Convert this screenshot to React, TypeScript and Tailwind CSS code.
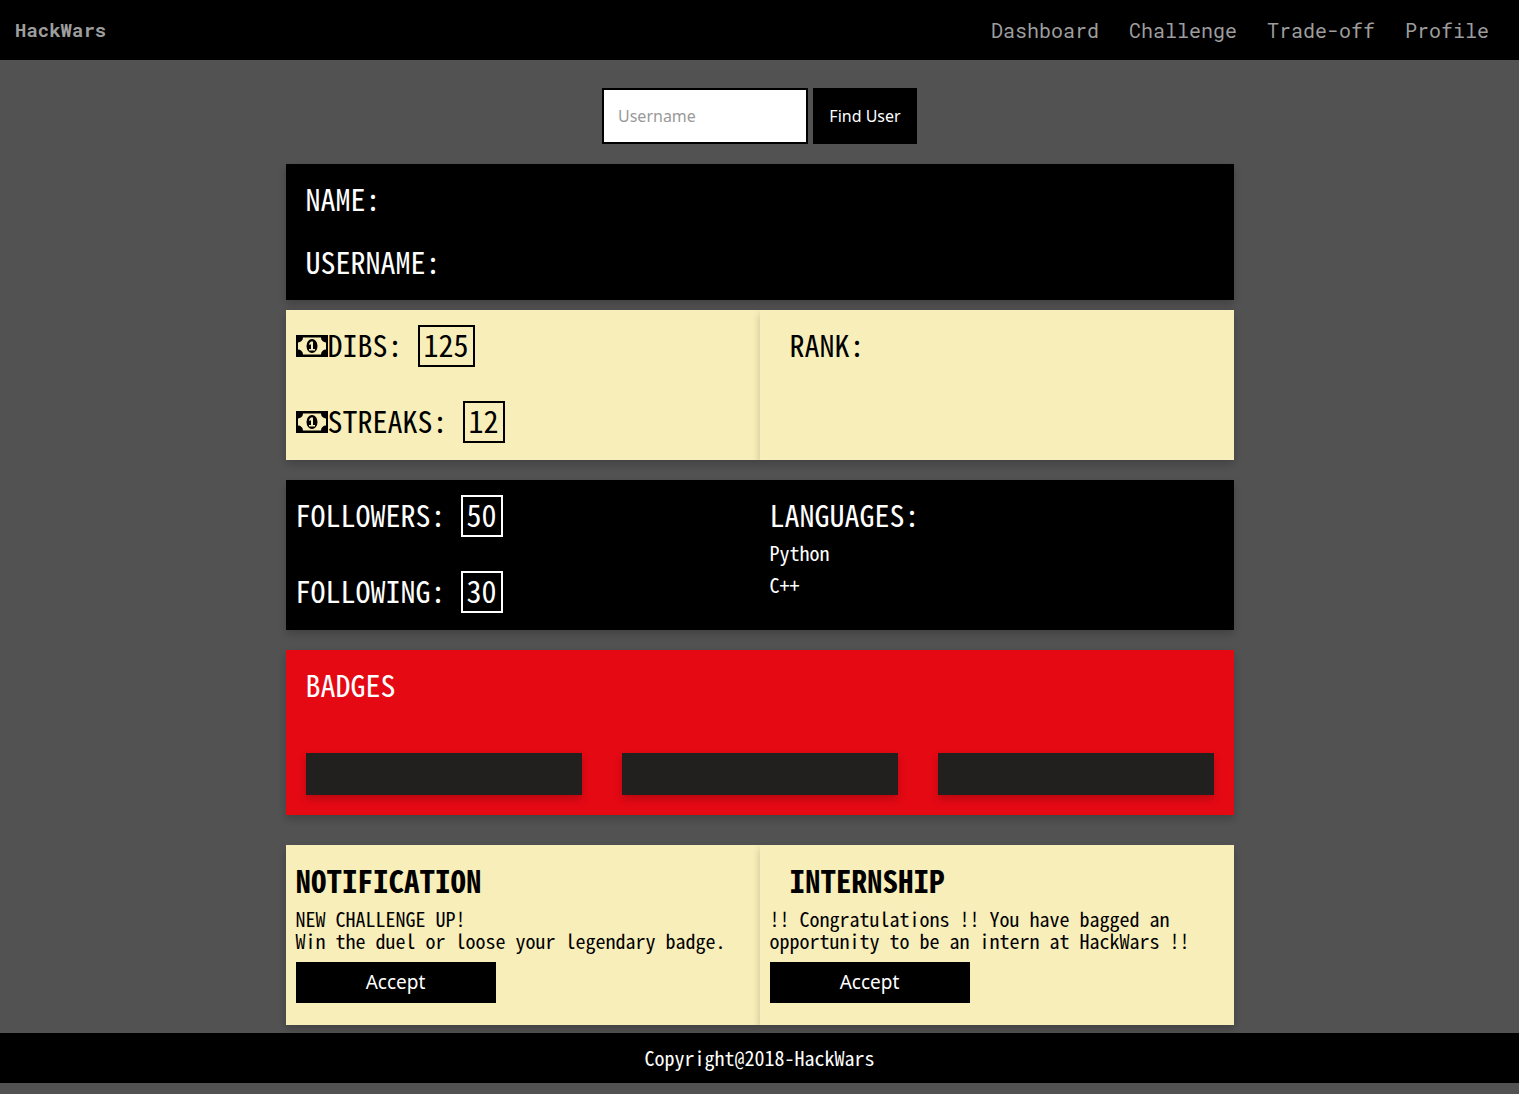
import React from "react";

const links = ["Dashboard", "Challenge", "Trade-off", "Profile"];

function MoneyIcon() {
  return (
    <svg viewBox="0 0 32 22" className="h-[22px] w-8 shrink-0" aria-hidden="true">
      <path fill="currentColor" fillRule="evenodd" d="M0 0h32v22H0zM7 2.500A5 5 0 0 1 2 7.500v7a5 5 0 0 1 5 5h18a5 5 0 0 1 5-5v-7a5 5 0 0 1-5-5z" />
      <ellipse cx="16" cy="11" rx="5.500" ry="7" fill="currentColor" />
      <path fill="#f8eeba" d="M15 6.500h2v7.500h2v1.500h-6v-1.500h2V9.200l-1.700.7V8.200z" />
    </svg>
  );
}

function Stat({ label, value, icon }: { label: string; value: number; icon?: boolean }) {
  return (
    <div className="flex h-[42px] items-center text-[30px] leading-[33px]">
      {icon && <MoneyIcon />}
      <h2 className="pb-1">{label}</h2>
      <span className="ml-[15px] border-2 px-1 pb-1 leading-[34px]">{value}</span>
    </div>
  );
}

const shadow = "shadow-[0_4px_8px_0_rgba(0,0,0,0.2)]";

export default function App() {
  return (
    <div className="min-h-screen bg-[#525252] font-['Noto_Sans_Mono_CJK_JP','Noto_Sans_CJK_JP',monospace] text-xl">
      <header className="flex h-[60px] items-center justify-between bg-black px-[15px] font-['Roboto_Mono','Liberation_Mono',monospace] text-[#9d9d9d]">
        <a href="#" className="text-[19px] font-bold">HackWars</a>
        <nav className="flex gap-[30px] pr-[15px]">
          {links.map((l) => (
            <a key={l} href="#">{l}</a>
          ))}
        </nav>
      </header>

      <main className="mx-auto max-w-[948px] pt-7 pb-2">
        <form className="flex justify-center gap-[5px] font-['Noto_Sans',sans-serif] text-base">
          <input
            type="text"
            aria-label="Username"
            placeholder="Username"
            className="h-14 w-[206px] border-2 border-black bg-white px-3.5 placeholder:text-[#999]"
          />
          <button type="button" className="h-14 w-[104px] bg-black text-white">Find User</button>
        </form>

        <section className={`mt-5 flex flex-col gap-[30px] bg-black px-5 pt-[18px] pb-[22px] text-[30px] leading-[33px] text-white ${shadow}`}>
          <h2>NAME:</h2>
          <h2>USERNAME:</h2>
        </section>

        <section className="mt-2.5 grid grid-cols-2 bg-[#f8eeba]">
          <div className={`flex flex-col gap-[34px] px-2.5 pt-[15px] pb-[17px] ${shadow}`}>
            <Stat icon label="DIBS:" value={125} />
            <Stat icon label="STREAKS:" value={12} />
          </div>
          <div className={`bg-[#f8eeba] px-[30px] pt-[18px] ${shadow}`}>
            <h2 className="text-[30px] leading-[33px]">RANK:</h2>
          </div>
        </section>

        <section className={`mt-5 grid grid-cols-2 bg-black text-white ${shadow}`}>
          <div className="flex flex-col gap-[34px] px-2.5 pt-[15px] pb-[17px]">
            <Stat label="FOLLOWERS:" value={50} />
            <Stat label="FOLLOWING:" value={30} />
          </div>
          <div className="px-2.5 pt-[18px]">
            <h2 className="text-[30px] leading-[33px]">LANGUAGES:</h2>
            <ul className="mt-1.5 leading-8">
              <li>Python</li>
              <li>C++</li>
            </ul>
          </div>
        </section>

        <section className={`mt-5 bg-[#e50914] px-5 pt-[18px] pb-5 text-white ${shadow}`}>
          <h2 className="text-[30px] leading-[33px]">BADGES</h2>
          <div className="mt-[52px] grid grid-cols-3 gap-10">
            <div className={`h-[42px] bg-[#221f1f] ${shadow}`} />
            <div className={`h-[42px] bg-[#221f1f] ${shadow}`} />
            <div className={`h-[42px] bg-[#221f1f] ${shadow}`} />
          </div>
        </section>

        <section className="mt-[30px] grid grid-cols-2 bg-[#f8eeba]">
          <div className={`px-2.5 pt-[18px] pb-[22px] ${shadow}`}>
            <h2 className="text-[31px] leading-[33px] font-bold">NOTIFICATION</h2>
            <p className="mt-3 leading-[22px]">
              NEW CHALLENGE UP!
              <br />
              Win the duel or loose your legendary badge.
            </p>
            <button type="button" className="mt-2.5 block h-[41px] w-[200px] bg-black font-['Noto_Sans',sans-serif] text-[19px] text-white">Accept</button>
          </div>
          <div className={`bg-[#f8eeba] px-2.5 pt-[18px] pb-[22px] ${shadow}`}>
            <h2 className="pl-5 text-[31px] leading-[33px] font-bold">INTERNSHIP</h2>
            <p className="mt-3 leading-[22px]">
              !! Congratulations !! You have bagged an opportunity to be an intern at HackWars !!
            </p>
            <button type="button" className="mt-2.5 block h-[41px] w-[200px] bg-black font-['Noto_Sans',sans-serif] text-[19px] text-white">Accept</button>
          </div>
        </section>
      </main>

      <footer className="flex h-[50px] items-center justify-center bg-black text-white">
        <p>Copyright@2018-HackWars</p>
      </footer>
    </div>
  );
}
